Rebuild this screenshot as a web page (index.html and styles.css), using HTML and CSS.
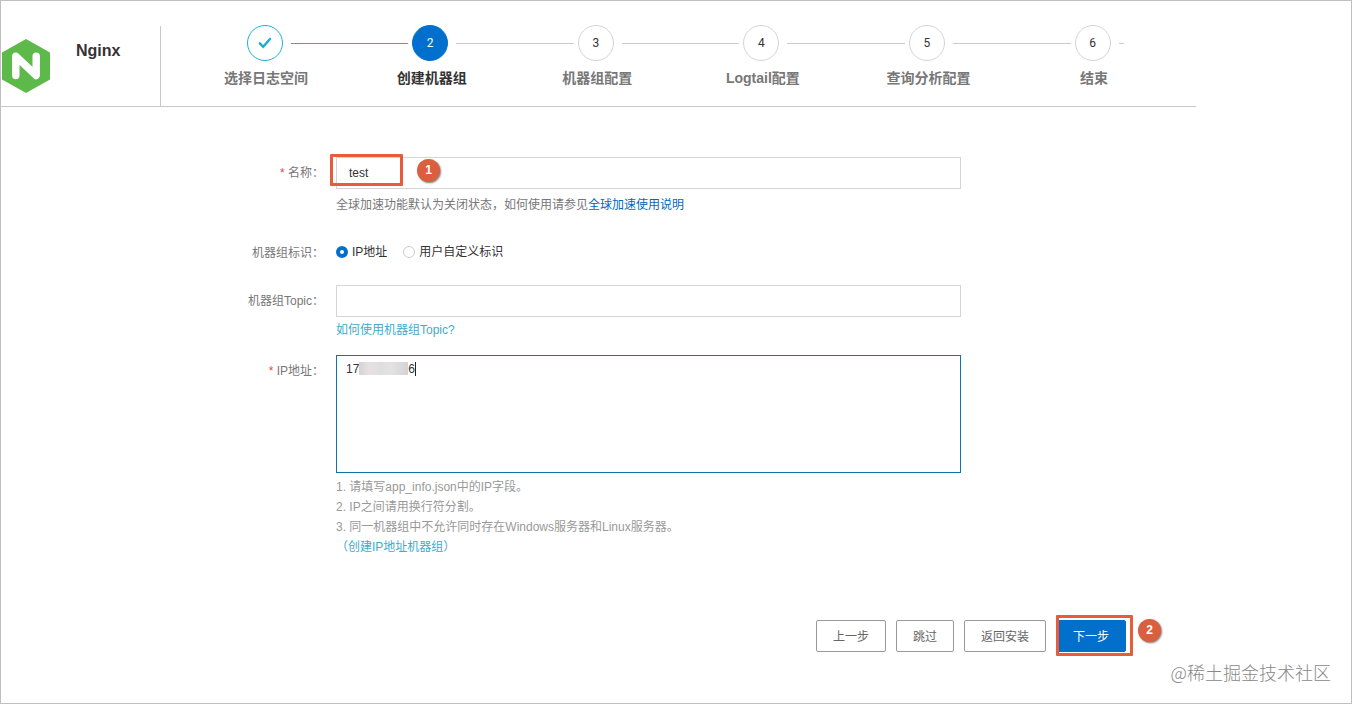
FILE: index.html
```html
<!doctype html>
<html lang="zh-CN">
<head>
<meta charset="UTF-8">
<title>Nginx</title>
<link rel="stylesheet" href="styles.css">
</head>
<body>
<div class="wrap">
	<div class="header">
		<div class="brand">
			<svg class="logo" width="50" height="56" viewBox="0 0 50 56">
				<path d="M25 1 L49 14.5 V41.5 L25 55 L1 41.5 V14.5 Z" fill="#5eb94b"/>
				<path d="M14.8 37.5 V18.3 L35.2 37.5 V18.3" fill="none" stroke="#fff" stroke-width="7.4" stroke-linecap="round" stroke-linejoin="round"/>
			</svg>
			<h1 class="name">Nginx</h1>
		</div>
		<ul class="steps">
			<li class="step done">
				<div class="track">
					<span class="num"><svg width="14" height="12" viewBox="0 0 14 12"><path d="M1.8 6.3 L5.2 9.8 L12 2" fill="none" stroke="#19aed0" stroke-width="2.4" stroke-linecap="round"/></svg></span>
					<span class="line"></span>
				</div>
				<p class="title">选择日志空间</p>
			</li>
			<li class="step current">
				<div class="track"><span class="num">2</span><span class="line"></span></div>
				<p class="title">创建机器组</p>
			</li>
			<li class="step">
				<div class="track"><span class="num">3</span><span class="line"></span></div>
				<p class="title">机器组配置</p>
			</li>
			<li class="step">
				<div class="track"><span class="num">4</span><span class="line"></span></div>
				<p class="title">Logtail配置</p>
			</li>
			<li class="step">
				<div class="track"><span class="num">5</span><span class="line"></span></div>
				<p class="title">查询分析配置</p>
			</li>
			<li class="step last">
				<div class="track"><span class="num">6</span><span class="line"></span></div>
				<p class="title">结束</p>
			</li>
		</ul>
	</div>

	<div class="form">
		<div class="row row-name">
			<label class="label" for="name"><em>*</em> 名称：</label>
			<div class="control">
				<input class="input" id="name" type="text" value="test">
				<p class="help">全球加速功能默认为关闭状态，如何使用请参见<a class="link-deep" href="#">全球加速使用说明</a></p>
				<span class="mark mark-name"></span>
				<span class="badge badge-name">1</span>
			</div>
		</div>
		<div class="row row-type">
			<span class="label">机器组标识：</span>
			<div class="control radios">
				<label class="radio checked"><i></i>IP地址</label>
				<label class="radio"><i></i>用户自定义标识</label>
			</div>
		</div>
		<div class="row row-topic">
			<label class="label" for="topic">机器组Topic：</label>
			<div class="control">
				<input class="input" id="topic" type="text">
				<p class="help"><a class="link" href="#">如何使用机器组Topic?</a></p>
			</div>
		</div>
		<div class="row row-ip">
			<span class="label"><em>*</em> IP地址：</span>
			<div class="control">
				<div class="textarea">17<span class="mask"></span>6<span class="caret"></span></div>
				<div class="hints">
					<p>1. 请填写app_info.json中的IP字段。</p>
					<p>2. IP之间请用换行符分割。</p>
					<p>3. 同一机器组中不允许同时存在Windows服务器和Linux服务器。</p>
					<p><a class="link" href="#">（创建IP地址机器组）</a></p>
				</div>
			</div>
		</div>
	</div>

	<div class="footer">
		<button class="btn" type="button">上一步</button>
		<button class="btn" type="button">跳过</button>
		<button class="btn" type="button">返回安装</button>
		<div class="next">
			<button class="btn primary" type="button">下一步</button>
			<span class="mark mark-next"></span>
			<span class="badge badge-next">2</span>
		</div>
	</div>
	<p class="watermark">@稀土掘金技术社区</p>
</div>
</body>
</html>
```

FILE: styles.css
```css
*{margin:0;padding:0;list-style:none;box-sizing:border-box;}
body{background:#fff;font:12px/20px "Liberation Sans","Noto Sans CJK SC",sans-serif;color:#777;overflow:hidden;}
a{text-decoration:none;}
em{font-style:normal;color:#e0474c;}
.wrap{position:relative;height:704px;border:1px solid #bfbfbf;}

/* header */
.header{display:flex;width:1195px;height:106px;padding-top:25px;border-bottom:1px solid #c8c8c8;}
.brand{display:flex;flex:none;width:160px;border-right:1px solid #c8c8c8;}
.logo{flex:none;margin-top:12px;}
.name{margin:15px 0 0 25px;font-size:16px;line-height:20px;color:#333;}
.steps{display:flex;padding-left:85.6px;margin-top:-1px;}
.step{flex:none;width:165.6px;}
.track{display:flex;align-items:center;height:36px;}
.num{display:flex;flex:none;align-items:center;justify-content:center;width:36px;height:36px;border:1px solid #d4d4d4;border-radius:50%;font-family:Roboto,"Liberation Sans",sans-serif;font-size:12px;color:#333;}
.line{flex:1;height:1px;margin:0 4px 0 8px;background:#ccc;}
.title{width:119px;margin:7px 0 0 -40px;text-align:center;font-size:14px;font-weight:bold;line-height:20px;color:#777;}
.done .num{border-color:#19b5cf;}
.done .line{background:#19b5cf;}
.current .num{border-color:#0070cc;background:#0070cc;color:#fff;}
.current .title{color:#333;}
.last{width:49px;}
.last .line{flex:none;width:5px;margin-right:0;}

/* form */
.form{padding-top:50px;}
.row{display:flex;}
.label{width:323px;margin-right:12px;text-align:right;white-space:nowrap;}
.control{position:relative;width:625px;}
.input{display:block;width:625px;height:32px;padding:0 12px;border:1px solid #d5d5d5;background:#fff;font:12px "Liberation Sans","Noto Sans CJK SC",sans-serif;color:#333;outline:none;}
.row-name{height:85px;}
.row-name .label{padding-top:6px;}
.row-name .help{padding-top:6px;}
.row-type{height:43px;}
.row-type .label{padding-top:1px;}
.row-topic{height:70px;}
.row-topic .label{padding-top:6px;}
.row-topic .help{padding-top:3px;}
.row-ip .label{padding-top:6px;}
.radios{display:flex;gap:16px;}
.radio{display:flex;align-items:center;height:20px;color:#333;}
.radio i{width:12px;height:12px;margin-right:4px;border:1px solid #ccc;border-radius:50%;}
.radio.checked i{border:4px solid #0070cc;}
.link{color:#3eaccb;}
.link-deep{color:#0068c0;}
.textarea{display:flex;align-items:flex-start;height:118px;padding:3px 9px;border:1px solid #0f74a8;color:#333;}
.mask{width:49px;height:13px;margin-top:3px;background:linear-gradient(90deg,#d5d3d4,#e8e0e1 20%,#dfdedf 45%,#e3e3e3 65%,#d3d3d3);}
.caret{width:1px;height:14px;margin-top:3px;background:#222;}
.hints{padding-top:4px;color:#999;}

/* buttons */
.footer{display:flex;gap:10px;padding:63px 0 0 815px;}
.btn{height:32px;padding:0 16px 2px;border:1px solid #999;border-radius:2px;background:#fff;font:12px "Liberation Sans","Noto Sans CJK SC",sans-serif;color:#666;}
.primary{border-color:#0070cc;background:#0070cc;color:#fff;}
.next{position:relative;}

/* callouts */
.mark{position:absolute;border:3px solid #e85c3c;border-radius:1px;}
.mark-name{left:-6px;top:-3px;width:73px;height:32px;}
.mark-next{left:0;top:-5px;width:77px;height:41px;}
.badge{position:absolute;width:23px;height:23px;border-radius:50%;background:#d95f3f;box-shadow:1px 1px 2px rgba(0,0,0,.5);text-align:center;font-size:12px;font-weight:bold;line-height:23px;color:#fff;}
.badge-name{left:81px;top:2px;}
.badge-next{left:82px;top:-1px;}

.watermark{position:absolute;right:20px;bottom:18px;font:18px/26px "Noto Sans CJK SC",sans-serif;font-weight:300;color:#888;}
```
